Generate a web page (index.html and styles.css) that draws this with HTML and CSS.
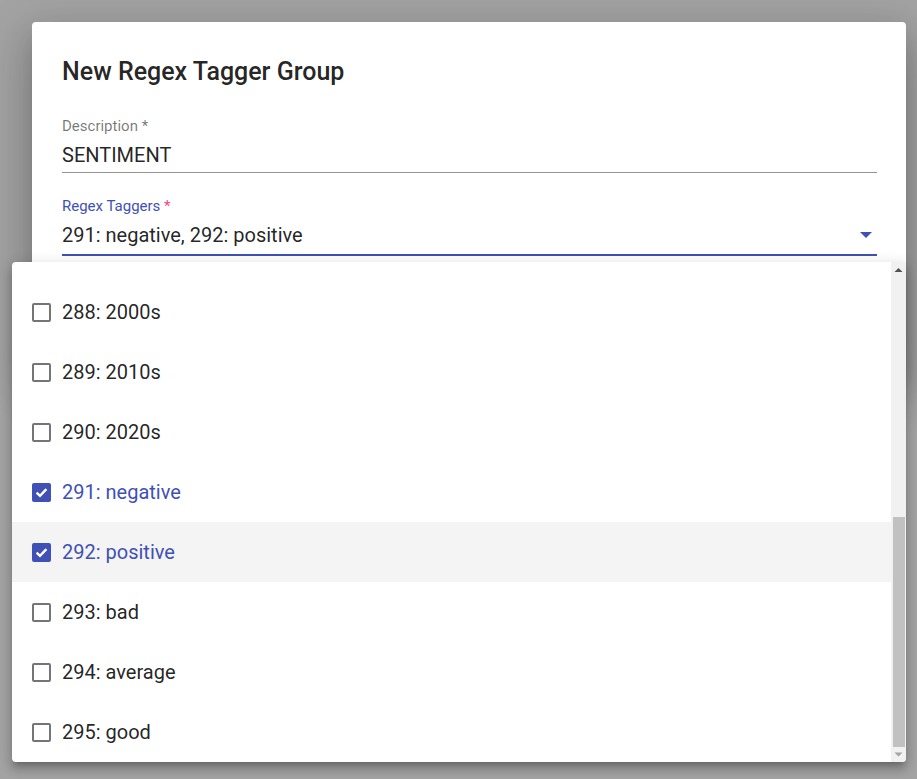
FILE: index.html
```html
<!DOCTYPE html>
<html>
<head>
<meta charset="utf-8">
<link rel="stylesheet" href="styles.css">
</head>
<body>
<div class="dialog">
  <h2 class="title">New Regex Tagger Group</h2>
  <div class="field">
    <div class="label">Description *</div>
    <div class="value">SENTIMENT</div>
  </div>
  <div class="field focused">
    <div class="label">Regex Taggers <span class="req">*</span></div>
    <div class="value select">
      <span>291: negative, 292: positive</span>
      <span class="arrow"></span>
    </div>
  </div>
  <div class="actions">
    <span class="btn">Cancel</span>
    <span class="btn">Create</span>
  </div>
</div>

<div class="panel">
  <div class="viewport">
    <div class="list">
      <div class="opt"><span class="cb"></span><span>288: 2000s</span></div>
      <div class="opt"><span class="cb"></span><span>289: 2010s</span></div>
      <div class="opt"><span class="cb"></span><span>290: 2020s</span></div>
      <div class="opt selected"><span class="cb"><svg viewBox="0 0 19 19" width="19" height="19"><path d="M4.6 9.6 L8 12.8 L14.4 6.2" fill="none" stroke="#fff" stroke-width="2.4"/></svg></span><span>291: negative</span></div>
      <div class="opt selected active"><span class="cb"><svg viewBox="0 0 19 19" width="19" height="19"><path d="M4.6 9.6 L8 12.8 L14.4 6.2" fill="none" stroke="#fff" stroke-width="2.4"/></svg></span><span>292: positive</span></div>
      <div class="opt"><span class="cb"></span><span>293: bad</span></div>
      <div class="opt"><span class="cb"></span><span>294: average</span></div>
      <div class="opt"><span class="cb"></span><span>295: good</span></div>
    </div>
  </div>
  <div class="sbar">
    <div class="sbtn"><svg width="15" height="15" viewBox="0 0 15 15"><path d="M3.5 10 L7.5 6 L11.5 10 Z" fill="#505050"/></svg></div>
    <div class="track"><div class="thumb"></div></div>
    <div class="sbtn"><svg width="15" height="15" viewBox="0 0 15 15"><path d="M3.5 5.5 L7.5 9.5 L11.5 5.5 Z" fill="#a3a3a3"/></svg></div>
  </div>
</div>
</body>
</html>
```

FILE: styles.css
```css
html, body {
  margin: 0;
  padding: 0;
  height: 100%;
  overflow: hidden;
}
body {
  background: #a3a3a3;
  font-family: Roboto, "Noto Sans", sans-serif;
  color: rgba(0, 0, 0, 0.87);
}
.dialog {
  margin: 22px 0 0 32px;
  width: 874px;
  box-sizing: border-box;
  padding: 34px 29px 40px 30px;
  background: #fff;
  border-radius: 4px;
  box-shadow: 0 11px 15px -7px rgba(0,0,0,.2), 0 24px 38px 3px rgba(0,0,0,.14), 0 9px 46px 8px rgba(0,0,0,.12);
}
.title {
  margin: 0 0 29px;
  font-size: 25px;
  line-height: 32px;
  font-weight: 500;
  color: rgba(0, 0, 0, 0.87);
}
.field {
  display: flex;
  flex-direction: column;
  gap: 8px;
  padding-bottom: 5px;
  border-bottom: 1px solid rgba(0, 0, 0, 0.42);
  margin-bottom: 24px;
}
.field.focused {
  padding-bottom: 7px;
  border-bottom: 2px solid #3f51b5;
}
.label {
  font-size: 15px;
  line-height: 18px;
  color: rgba(0, 0, 0, 0.54);
}
.focused .label {
  color: #3f51b5;
}
.req {
  color: #ff4081;
}
.value {
  font-size: 20px;
  line-height: 24px;
  color: rgba(0, 0, 0, 0.87);
}
.select {
  display: flex;
  align-items: center;
  justify-content: space-between;
}
.arrow {
  width: 0;
  height: 0;
  margin-right: 5px;
  border-left: 6px solid transparent;
  border-right: 6px solid transparent;
  border-top: 6px solid #3f51b5;
}
.actions {
  display: flex;
  justify-content: flex-end;
  gap: 8px;
  padding-top: 20px;
}
.btn {
  font-size: 16px;
  padding: 8px 16px;
  color: #3f51b5;
}
.panel {
  position: absolute;
  left: 12px;
  top: 262px;
  width: 894px;
  height: 500px;
  display: flex;
  background: #fff;
  border-radius: 4px;
  overflow: hidden;
  box-shadow: 0 5px 5px -3px rgba(0,0,0,.2), 0 8px 10px 1px rgba(0,0,0,.14), 0 3px 14px 2px rgba(0,0,0,.12);
}
.viewport {
  flex: 1;
  display: flex;
  flex-direction: column-reverse;
  overflow: hidden;
}
.list {
  flex-shrink: 0;
}
.opt {
  height: 60px;
  display: flex;
  align-items: center;
  padding-left: 20px;
  gap: 11px;
  font-size: 20px;
  color: rgba(0, 0, 0, 0.87);
}
.opt.active {
  background: #f4f4f4;
}
.opt.selected {
  color: #3f51b5;
}
.cb {
  width: 19px;
  height: 19px;
  box-sizing: border-box;
  border: 2px solid rgba(0, 0, 0, 0.54);
  border-radius: 2px;
  display: flex;
  align-items: center;
  justify-content: center;
  flex-shrink: 0;
}
.selected .cb {
  background: #3f51b5;
  border: none;
}
.cb svg {
  display: block;
}
.sbar {
  width: 15px;
  flex-shrink: 0;
  display: flex;
  flex-direction: column;
  background: #f1f1f1;
}
.sbtn {
  height: 15px;
  flex-shrink: 0;
}
.sbtn svg {
  display: block;
}
.track {
  flex: 1;
  display: flex;
  flex-direction: column;
  justify-content: flex-end;
}
.thumb {
  height: 230px;
  margin: 0 1px 0 2px;
  background: #c1c1c1;
}
```
